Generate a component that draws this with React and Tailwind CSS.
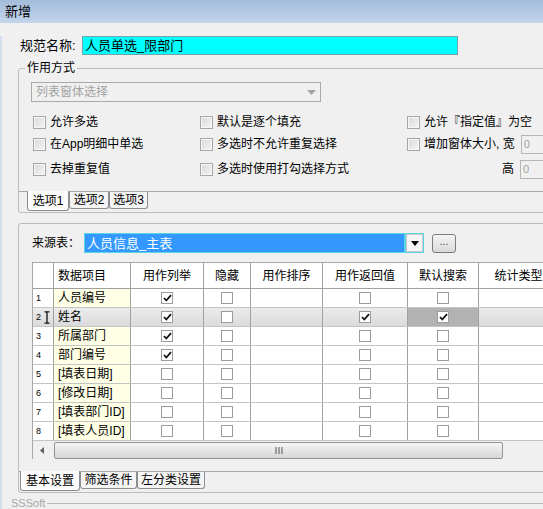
import React from 'react';

const FONT = "font-['Liberation_Sans','Noto_Sans_CJK_SC',sans-serif]";

const rows = [
  { n: 1, name: '人员编号', list: true },
  { n: 2, name: '姓名', list: true, ret: true, search: true, sel: true },
  { n: 3, name: '所属部门', list: true },
  { n: 4, name: '部门编号', list: true },
  { n: 5, name: '[填表日期]' },
  { n: 6, name: '[修改日期]' },
  { n: 7, name: '[填表部门ID]' },
  { n: 8, name: '[填表人员ID]' },
];

const GRID = 'grid grid-cols-[21px_77px_73px_47px_72px_85px_71px_80px]';

function Check() {
  return (
    <svg width="9" height="8" viewBox="0 0 9 8" className="block">
      <path d="M1 4 L3.3 6.5 L8 1.2" fill="none" stroke="#111" strokeWidth="1.8" />
    </svg>
  );
}

function GridBox({ checked }) {
  return (
    <span className="flex h-[12px] w-[12px] items-center justify-center border border-[#9b9b9b] bg-white">
      {checked && <Check />}
    </span>
  );
}

function OptBox() {
  return (
    <span className="h-[13px] w-[13px] shrink-0 border border-[#a6a6a6] bg-gradient-to-br from-[#d9d9d9] to-[#f5f5f5] shadow-[inset_0_0_0_1px_#f7f7f7]" />
  );
}

function Opt({ label }) {
  return (
    <div className="flex items-center gap-[4px]">
      <OptBox />
      <span className="whitespace-nowrap text-[12px] leading-[14px] text-black">{label}</span>
    </div>
  );
}

function SmallInput() {
  return (
    <span className="ml-[6px] flex h-[19px] w-[30px] shrink-0 items-center border border-[#b5b5b5] bg-[#f0f0f0] pl-[2px] text-[11px] text-[#a0a0a0]">
      0
    </span>
  );
}

function BottomTab({ label, selected, w }) {
  return (
    <div
      className={
        'flex items-center justify-center rounded-b-[3px] border-x border-b border-[#8c8e94] text-[12px] leading-[14px] ' +
        w +
        (selected ? ' -mt-px h-[20px] bg-[#fbfbfb]' : ' h-[17px] bg-[#f4f4f4]')
      }
    >
      {label}
    </div>
  );
}

export default function App() {
  return (
    <div className={`relative h-[509px] w-[543px] overflow-hidden bg-[#f0f0f0] text-black ${FONT}`}>
      {/* title bar */}
      <div className="flex h-[23px] items-center bg-gradient-to-b from-[#a3bcda] to-[#c3d6ec] pl-[5px] text-[13px] leading-[15px]">
        新增
      </div>

      <div className="h-[486px] border-l-2 border-[#d3dfec]">
        {/* name */}
        <div className="mt-[13px] flex h-[19px] items-center pl-[18px]">
          <span className="w-[62px] shrink-0 whitespace-nowrap text-[13px] leading-[15px]">规范名称:</span>
          <span className="flex h-[19px] w-[376px] items-center border border-[#73a4a8] bg-[#00ffff] pl-[2px] text-[13px] leading-[15px]">
            人员单选_限部门
          </span>
        </div>

        {/* group */}
        <div className="relative ml-[16px] mt-[13px] w-[540px] rounded-[3px] border border-[#bcbcbc]">
          <span className="absolute -top-[8px] left-[6px] bg-[#f0f0f0] px-[2px] text-[12px] leading-[14px]">
            作用方式
          </span>
          <div className="ml-[12px] mt-[13px] flex h-[20px] w-[290px] items-center justify-between border border-[#a9a9a9] bg-[#f0f0f0] px-[4px]">
            <span className="text-[12px] leading-[14px] text-[#a3a3a3]">列表窗体选择</span>
            <svg width="9" height="5" viewBox="0 0 9 5">
              <path d="M0 0 H9 L4.5 5 Z" fill="#a3a3a3" />
            </svg>
          </div>

          <div className="mt-[10px] flex h-[20px] items-center pl-[14px]">
            <div className="w-[167px]"><Opt label="允许多选" /></div>
            <div className="w-[207px]"><Opt label="默认是逐个填充" /></div>
            <Opt label="允许『指定值』为空" />
          </div>
          <div className="mt-[2px] flex h-[20px] items-center pl-[14px]">
            <div className="w-[167px]"><Opt label="在App明细中单选" /></div>
            <div className="w-[207px]"><Opt label="多选时不允许重复选择" /></div>
            <Opt label="增加窗体大小, 宽" />
            <SmallInput />
          </div>
          <div className="mt-[5px] flex h-[20px] items-center pl-[14px]">
            <div className="w-[167px]"><Opt label="去掉重复值" /></div>
            <div className="w-[207px]"><Opt label="多选时使用打勾选择方式" /></div>
            <span className="ml-[95px] text-[12px] leading-[14px]">高</span>
            <SmallInput />
          </div>

          <div className="mt-[12px] border-t border-[#a9a9a9]" />
          <div className="flex pb-[1px] pl-[8px]">
            <BottomTab label="选项1" selected w="w-[42px]" />
            <BottomTab label="选项2" w="w-[40px]" />
            <BottomTab label="选项3" w="w-[39px]" />
          </div>
        </div>

        {/* main panel */}
        <div className="ml-[16px] mt-[10px] w-[560px] rounded-[3px] border border-[#bcbcbc]">
          <div className="flex items-center pl-[13px] pt-[9px]">
            <span className="w-[52px] shrink-0 whitespace-nowrap text-[12px] leading-[14px]">来源表：</span>
            <div className="flex h-[20px] w-[340px] border border-[#5ad6e2] bg-[#5ad6e2]">
              <span className="flex flex-1 items-center bg-[#3399ff] pl-[2px] text-[13px] leading-[15px] text-white">
                人员信息_主表
              </span>
              <span className="ml-[2px] flex w-[17px] items-center justify-center border border-[#c8c8c8] bg-[#f6f6f6]">
                <svg width="8" height="5" viewBox="0 0 8 5">
                  <path d="M0 0 H8 L4 5 Z" fill="#000" />
                </svg>
              </span>
            </div>
            <span className="ml-[8px] flex h-[19px] w-[24px] items-center justify-center rounded-[3px] border border-[#7c7c7c] bg-gradient-to-b from-[#f4f4f4] to-[#d9d9d9] pb-[3px] text-[10px] leading-[10px] text-[#333]">
              ...
            </span>
          </div>

          {/* grid */}
          <div className="ml-[13px] mt-[9px] border-l border-t border-[#a8a8a8] bg-white">
            <div className={`${GRID} h-[26px] border-b border-[#a0a0a0] text-[12px] leading-[14px]`}>
              <div className="border-r border-[#a0a0a0] bg-white" />
              <div className="flex items-center border-r border-[#a0a0a0] pl-[4px]">数据项目</div>
              <div className="flex items-center justify-center border-r border-[#a0a0a0]">用作列举</div>
              <div className="flex items-center justify-center border-r border-[#a0a0a0]">隐藏</div>
              <div className="flex items-center justify-center border-r border-[#a0a0a0]">用作排序</div>
              <div className="flex items-center justify-center border-r border-[#a0a0a0]">用作返回值</div>
              <div className="flex items-center justify-center border-r border-[#a0a0a0]">默认搜索</div>
              <div className="flex items-center justify-center border-r border-[#a0a0a0]">统计类型</div>
            </div>
            {rows.map((r) => (
              <div
                key={r.n}
                className={`${GRID} h-[19px] border-b border-[#c4c4c4] text-[12px] leading-[14px] ${r.sel ? 'bg-gradient-to-b from-[#ececec] to-[#dadada]' : ''}`}
              >
                <div className="flex items-center border-r border-[#a0a0a0] pl-[3px] text-[9px] leading-[10px]">
                  {r.n}
                  {r.sel && (
                    <svg width="6" height="13" viewBox="0 0 6 13" className="ml-[3px]">
                      <path d="M0.5 0.8 H5.5 M3 0.8 V12.2 M0.5 12.2 H5.5" fill="none" stroke="#111" strokeWidth="1.3" />
                    </svg>
                  )}
                </div>
                <div className={`flex items-center border-r border-[#a0a0a0] pl-[4px] ${r.sel ? '' : 'bg-[#ffffe6]'}`}>
                  {r.name}
                </div>
                <div className="flex items-center justify-center border-r border-[#a0a0a0]">
                  <GridBox checked={r.list} />
                </div>
                <div className="flex items-center justify-center border-r border-[#a0a0a0]">
                  <GridBox />
                </div>
                <div className="border-r border-[#a0a0a0]" />
                <div className="flex items-center justify-center border-r border-[#a0a0a0]">
                  <GridBox checked={r.ret} />
                </div>
                <div className={`flex items-center justify-center border-r border-[#a0a0a0] ${r.sel ? 'bg-[#b3b3b3]' : ''}`}>
                  <GridBox checked={r.search} />
                </div>
                <div className="border-r border-[#a0a0a0]" />
              </div>
            ))}
            {/* scrollbar */}
            <div className="flex h-[18px] items-center bg-[#f0f0f0]">
              <div className="flex w-[21px] items-center pl-[7px]">
                <svg width="4" height="7" viewBox="0 0 4 7">
                  <path d="M4 0 V7 L0 3.5 Z" fill="#606060" />
                </svg>
              </div>
              <div className="flex h-[17px] w-[449px] items-center justify-center rounded-[2px] border border-[#939393] bg-gradient-to-b from-[#f5f5f5] to-[#d6d6d6]">
                <svg width="8" height="7" viewBox="0 0 8 7">
                  <path d="M1 0 V7 M4 0 V7 M7 0 V7" stroke="#555" strokeWidth="1" />
                </svg>
              </div>
            </div>
          </div>

          <div className="mt-[12px] border-t border-[#a9a9a9]" />
          <div className="flex pb-[1px] pl-[1px]">
            <BottomTab label="基本设置" selected w="w-[60px]" />
            <BottomTab label="筛选条件" w="w-[57px]" />
            <BottomTab label="左分类设置" w="w-[68px]" />
          </div>
        </div>

        {/* footer */}
        <div className="mt-[4px] flex items-center pl-[9px]">
          <span className="text-[11px] leading-[12px] text-[#a8a8a8]">SSSoft</span>
          <div className="ml-[2px] h-px flex-1 bg-[#b8b8b8]" />
        </div>
      </div>
    </div>
  );
}
